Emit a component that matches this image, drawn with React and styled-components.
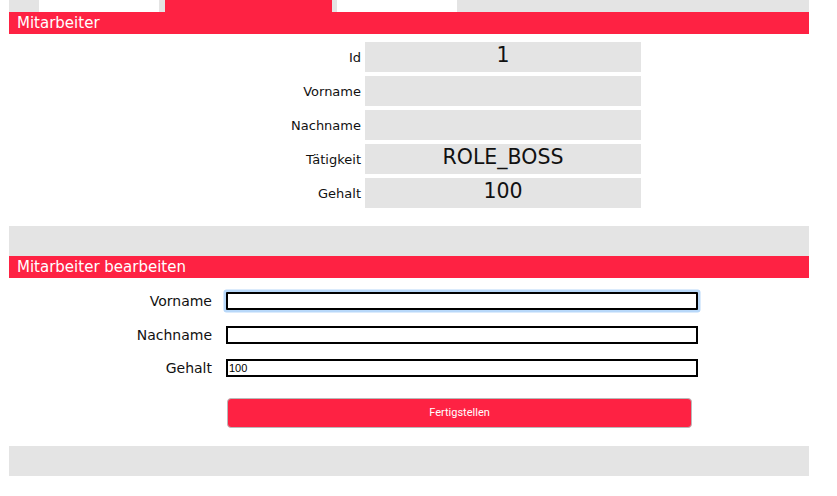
import React from 'react';
import styled, { createGlobalStyle } from 'styled-components';

const RED = '#fe2243';
const GRAY = '#e4e4e4';

const GlobalStyle = createGlobalStyle`
  body {
    margin: 0;
    background: #fff;
    font-family: "DejaVu Sans", Verdana, sans-serif;
  }
`;

const Page = styled.div`
  width: 800px;
  margin-left: 9px;
`;

const TabStrip = styled.div`
  display: flex;
  height: 12px;
  background: ${GRAY};
  padding-left: 30px;
`;

const Tab = styled.div`
  width: ${(p) => p.$w}px;
  margin-right: ${(p) => p.$gap || 0}px;
  background: ${(p) => (p.$active ? RED : '#fff')};
`;

const SectionHeader = styled.div`
  height: 22px;
  line-height: 22px;
  background: ${RED};
  color: #fff;
  font-size: 15px;
  padding-left: 8px;
`;

const InfoGrid = styled.div`
  display: grid;
  grid-template-columns: 352px 276px;
  grid-auto-rows: 30px;
  column-gap: 4px;
  row-gap: 4px;
  margin-top: 8px;
`;

const InfoLabel = styled.div`
  display: flex;
  align-items: center;
  justify-content: flex-end;
  font-size: 13px;
  color: #111;
`;

const InfoValue = styled.div`
  display: flex;
  align-items: center;
  justify-content: center;
  background: ${GRAY};
  font-size: 20.5px;
  color: #111;
  padding-bottom: 4px;
  box-sizing: border-box;
`;

const GrayBar = styled.div`
  height: 30px;
  background: ${GRAY};
  margin-top: ${(p) => p.$mt}px;
`;

const Form = styled.div`
  display: grid;
  grid-template-columns: 203px 472px;
  column-gap: 14px;
  row-gap: 15.5px;
  margin-top: 14px;
`;

const FormLabel = styled.label`
  display: flex;
  align-items: center;
  justify-content: flex-end;
  font-size: 14px;
  color: #111;
`;

const Input = styled.input`
  box-sizing: border-box;
  height: 18px;
  width: 100%;
  border: 2px solid #000;
  margin: 0;
  padding: 0 1px;
  font-family: "Liberation Sans", Arial, sans-serif;
  font-size: 11px;
  color: #000;
  outline: none;
  box-shadow: ${(p) => (p.$focused ? '0 0 0 2.5px #b8d8f9' : 'none')};
  border-radius: ${(p) => (p.$focused ? '1px' : '0')};
`;

const ButtonRow = styled.div`
  grid-column: 2;
  padding-left: 1px;
  margin-top: 5px;
`;

const SubmitButton = styled.button`
  width: 465px;
  height: 30px;
  background: ${RED};
  border: 1px solid #b9b9b9;
  border-radius: 4px;
  color: #fff;
  font-family: Roboto, "Liberation Sans", sans-serif;
  font-size: 11px;
  font-weight: 400;
  cursor: pointer;
`;

const info = [
  ['Id', '1'],
  ['Vorname', ''],
  ['Nachname', ''],
  ['Tätigkeit', 'ROLE_BOSS'],
  ['Gehalt', '100'],
];

export default function App() {
  return (
    <Page>
      <GlobalStyle />
      <TabStrip>
        <Tab $w={120} $gap={6} />
        <Tab $w={167} $gap={5} $active />
        <Tab $w={120} />
      </TabStrip>
      <SectionHeader>Mitarbeiter</SectionHeader>
      <InfoGrid>
        {info.map(([label, value]) => (
          <React.Fragment key={label}>
            <InfoLabel>{label}</InfoLabel>
            <InfoValue>{value}</InfoValue>
          </React.Fragment>
        ))}
      </InfoGrid>
      <GrayBar $mt={18} />
      <SectionHeader>Mitarbeiter bearbeiten</SectionHeader>
      <Form>
        <FormLabel>Vorname</FormLabel>
        <Input $focused defaultValue="" />
        <FormLabel>Nachname</FormLabel>
        <Input defaultValue="" />
        <FormLabel>Gehalt</FormLabel>
        <Input defaultValue="100" />
        <ButtonRow>
          <SubmitButton>Fertigstellen</SubmitButton>
        </ButtonRow>
      </Form>
      <GrayBar $mt={18} />
    </Page>
  );
}
